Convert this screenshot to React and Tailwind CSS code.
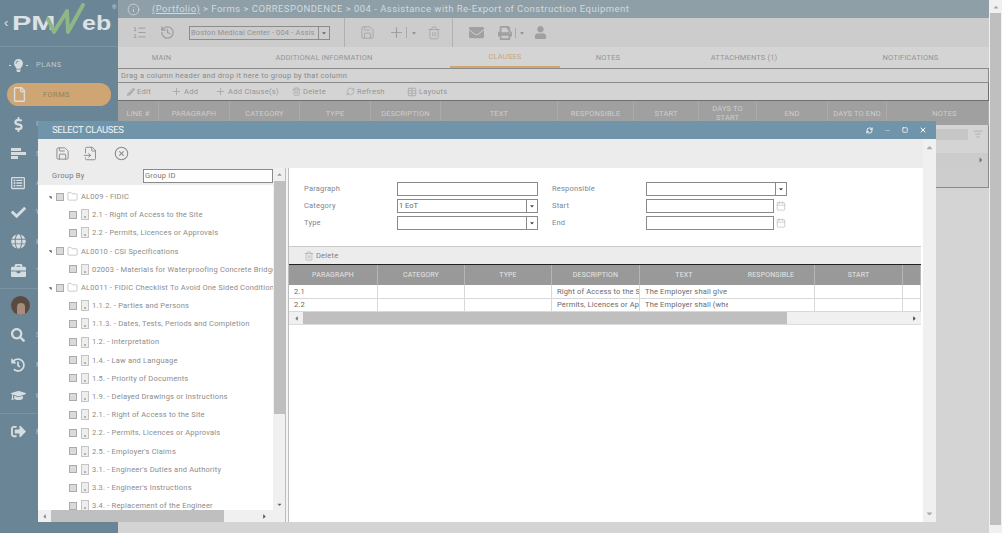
import React from "react";
import { FaDollarSign, FaCheck, FaGlobe, FaBriefcase, FaSearch, FaHistory, FaGraduationCap, FaSignOutAlt, FaRegFile, FaEnvelope, FaPrint, FaUser, FaPencilAlt, FaCaretDown, FaCaretUp, FaCaretLeft, FaCaretRight, FaRegListAlt, FaLightbulb } from "react-icons/fa";
import { ListOrdered, History, Save, Plus, Trash2, RefreshCw, Table, FileInput, CircleX, Folder, Calendar, Info, Minus, Square, X, ListFilter } from "lucide-react";

const nav = [
  { icon: <div className="flex items-center gap-[1px]"><div className="w-[2px] h-[1px] bg-[#d6dde1]" /><FaLightbulb size={13} /><div className="w-[2px] h-[1px] bg-[#d6dde1]" /></div>, label: "PLANS", cls: "h-[36px]" },
  { icon: <FaRegFile size={15} />, label: "FORMS", cls: "h-[23px] mb-[3px] bg-[#cfa673] rounded-full mx-[7px]", active: true },
  { icon: <FaDollarSign size={15} />, label: "COSTS", cls: "h-[30px]" },
  { bars: true, label: "SCHEDULE", cls: "h-[29px]" },
  { icon: <FaRegListAlt size={14} />, label: "ASSETS", cls: "h-[29px]" },
  { icon: <FaCheck size={15} />, label: "WORKFLOW", cls: "h-[30px]" },
  { icon: <FaGlobe size={15} />, label: "HOME", cls: "h-[29px]" },
  { icon: <FaBriefcase size={15} />, label: "TOOLS", cls: "h-[29px]" },
];
const nav2 = [
  { icon: <FaSearch size={14} />, label: "SEARCH", cls: "h-[30px]" },
  { icon: <FaHistory size={14} />, label: "RECENT", cls: "h-[30px]" },
  { icon: <FaGraduationCap size={15} />, label: "UNIVERSITY", cls: "h-[31px]" },
];

function NavItem({ item }) {
  return (
    <div className={`flex items-center shrink-0 ${item.cls}`}>
      <div className={`flex justify-center text-[#d6dde1] ${item.active ? "w-[24px]" : "w-[36px]"}`}>
        {item.bars ? (
          <div className="flex flex-col gap-[1px]">
            <div className="w-[10px] h-[3px] bg-[#d6dde1]" />
            <div className="w-[15px] h-[3px] bg-[#d6dde1]" />
            <div className="w-[7px] h-[3px] bg-[#d6dde1]" />
          </div>
        ) : item.icon}
      </div>
      <span className={`text-[7.5px] tracking-[0.4px] ${item.active ? "ml-[12px] text-[#93805f]" : "text-[#bcc9d0]"}`}>{item.label}</span>
    </div>
  );
}

function Sidebar() {
  return (
    <div className="w-[118px] h-[533px] shrink-0 bg-[#6a8595] flex flex-col">
      <div className="h-[47px] shrink-0 border-b border-[#7b93a2] relative flex items-center pl-[4px] font-['Liberation_Sans',sans-serif] font-bold text-[#dbe1e5]">
        <span className="w-[8px] text-[13px] font-normal">‹</span>
        <span className="w-[70px] text-[20px] inline-block origin-left scale-x-[1.45]">PM</span>
        <span className="w-[30px] text-[20px] inline-block origin-left scale-x-[1.25]">eb</span>
        <span className="text-[6px] font-normal self-start mt-[3px]">®</span>
        <svg viewBox="0 0 44 32" className="absolute left-[44px] top-[3px] w-[44px] h-[32px]">
          <path d="M4 16 L10 29 L23 8 L24 29 L39 2" fill="none" stroke="#8db784" strokeWidth="4" strokeLinejoin="round" strokeLinecap="round" />
        </svg>
      </div>
      <div className="flex flex-col">
        {nav.map((n) => <NavItem key={n.label} item={n} />)}
      </div>
      <div className="border-t border-[#7b93a2] mt-[3px] h-[32px] shrink-0 flex items-center pl-[11px] pt-[2px]">
        <div className="w-[19px] h-[19px] rounded-full bg-[#5a4a40] flex items-end justify-center overflow-hidden">
          <div className="w-[8px] h-[12px] rounded-t-full bg-[#a58c7c]" />
        </div>
      </div>
      {nav2.map((n) => <NavItem key={n.label} item={n} />)}
      <div className="border-t border-[#7b93a2] h-[36px] mt-[2px] shrink-0 flex items-center">
        <div className="w-[36px] flex justify-center text-[#d6dde1]"><FaSignOutAlt size={15} /></div>
        <span className="text-[7.5px] text-[#bcc9d0]">EXIT</span>
      </div>
    </div>
  );
}

const tabs = [
  ["MAIN", "w-[87px]"],
  ["ADDITIONAL INFORMATION", "w-[238px]"],
  ["CLAUSES", "w-[110px] ml-[7px] border-b-2 border-[#cfa673] text-[#c8a678]"],
  ["NOTES", "w-[96px]"],
  ["ATTACHMENTS (1)", "w-[176px]"],
  ["NOTIFICATIONS", "w-[157px]"],
];
const mainCols = [
  ["LINE #", "w-[41px]"], ["PARAGRAPH", "w-[71px]"], ["CATEGORY", "w-[70px]"], ["TYPE", "w-[71px]"], ["DESCRIPTION", "w-[70px]"],
  ["TEXT", "w-[117px]"], ["RESPONSIBLE", "w-[76px]"], ["START", "w-[65px]"], ["DAYS TO START", "w-[58px] px-[12px]"], ["END", "w-[71px]"], ["DAYS TO END", "w-[59px]"], ["NOTES", "w-[102px] pl-[14px]"],
];

function TbBtn({ icon, label, cls }) {
  return (
    <div className={`flex items-center gap-[2px] ${cls}`}>
      <span className="text-[#a8a8a8]">{icon}</span>
      <span>{label}</span>
    </div>
  );
}

function Background() {
  return (
    <div className="w-[871px] h-[533px] shrink-0 bg-[#d4d4d4] flex flex-col text-[7.5px] tracking-[0.15px] text-[#959595]">
      <div className="h-[18px] shrink-0 bg-[#8e9fa8] flex items-center text-[#d3dade] text-[9.5px] tracking-[0.46px]">
        <Info size={13} strokeWidth={1.5} className="ml-[9px] mr-[12px] shrink-0" />
        <span className="whitespace-nowrap"><span className="underline">(Portfolio)</span> &gt; Forms &gt; CORRESPONDENCE &gt; 004 - Assistance with Re-Export of Construction Equipment</span>
      </div>
      <div className="h-[29px] shrink-0 bg-[#cccccc] flex items-center text-[#a0a0a0]">
        <ListOrdered size={15} strokeWidth={1.6} className="ml-[14px]" />
        <History size={15} strokeWidth={2.2} className="ml-[13px]" />
        <div className="ml-[14px] w-[141px] h-[14px] border border-[#8c8c8c] flex items-center text-[7.5px] text-[#929292] whitespace-nowrap overflow-hidden">
          <span className="flex-1 pl-[1px] overflow-hidden">Boston Medical Center - 004 - Assis</span>
          <span className="w-[11px] h-full border-l border-[#8c8c8c] flex items-center justify-center text-[#666] shrink-0"><FaCaretDown size={6} /></span>
        </div>
        <div className="ml-[14px] mr-[15px] w-[1px] h-[29px] bg-[#b0b0b0]" />
        <Save size={15} strokeWidth={1.3} />
        <Plus size={17} strokeWidth={1.6} className="ml-[13px]" />
        <div className="w-[1px] h-[11px] bg-[#aaa] ml-[1px]" />
        <FaCaretDown size={6} className="ml-[4px] text-[#888]" />
        <Trash2 size={14} strokeWidth={1.3} className="ml-[10px]" />
        <div className="ml-[11px] mr-[16px] w-[1px] h-[29px] bg-[#b0b0b0]" />
        <FaEnvelope size={15} />
        <FaPrint size={14} className="ml-[14px]" />
        <div className="w-[1px] h-[10px] bg-[#aaa] ml-[3px]" />
        <FaCaretDown size={6} className="ml-[3px] text-[#888]" />
        <FaUser size={13} className="ml-[9px]" />
      </div>
      <div className="h-[22px] shrink-0 flex border-b border-[#8a8a8a]">
        {tabs.map(([t, c]) => <div key={t} className={`${c} h-full shrink-0 flex items-center justify-center`}>{t}</div>)}
      </div>
      <div className="h-[14px] shrink-0 flex items-center pl-[3px] border-b border-[#8a8a8a] border-r tracking-[0.3px] text-[#8a8a8a] whitespace-nowrap">Drag a column header and drop it here to group by that column</div>
      <div className="h-[18px] shrink-0 flex items-center border-b border-[#6f6f6f] border-r tracking-[0.3px]">
        <TbBtn icon={<FaPencilAlt size={8} />} label="Edit" cls="ml-[9px] w-[44px]" />
        <TbBtn icon={<Plus size={11} />} label="Add" cls="w-[44px]" />
        <TbBtn icon={<Plus size={11} />} label="Add Clause(s)" cls="w-[77px]" />
        <TbBtn icon={<Trash2 size={9} />} label="Delete" cls="w-[54px]" />
        <TbBtn icon={<RefreshCw size={9} />} label="Refresh" cls="w-[61px]" />
        <TbBtn icon={<Table size={10} />} label="Layouts" />
      </div>
      <div className="h-[24px] shrink-0 flex bg-[#a0a0a0] text-[#cdcdcd]">
        {mainCols.map(([t, c]) => (
          <div key={t} className={`${c} shrink-0 flex items-center justify-center text-center leading-[9px] border-r border-[#ababab]`}>{t}</div>
        ))}
      </div>
      <div className="flex justify-end h-[18px] shrink-0 items-center bg-[#d4d4d4] border-r border-[#8a8a8a]">
        <div className="w-[40px] h-[11px] bg-[#c6c6c6]" />
        <div className="w-[20px] flex justify-center text-[#aaa]"><ListFilter size={10} /></div>
      </div>
      <div className="h-[10px] shrink-0 bg-[#d4d4d4] border-r border-[#8a8a8a]" />
      <div className="h-[14px] shrink-0 bg-[#cccccc] flex justify-end items-center pr-[3px] text-[#777] border-r border-[#8a8a8a]"><FaCaretRight size={8} /></div>
      <div className="h-[21px] shrink-0 bg-[#cdcdcd] border-b border-r border-[#8a8a8a]" />
    </div>
  );
}

const folders = [
  { t: "AL009 - FIDIC", folder: true },
  { t: "2.1 - Right of Access to the Site" },
  { t: "2.2 - Permits, Licences or Approvals" },
  { t: "AL0010 - CSI Specifications", folder: true },
  { t: "02003 - Materials for Waterproofing Concrete Bridge Decks" },
  { t: "AL0011 - FIDIC Checklist To Avoid One Sided Conditions", folder: true },
  { t: "1.1.2. - Parties and Persons" },
  { t: "1.1.3.  - Dates, Tests, Periods and Completion" },
  { t: "1.2. - Interpretation" },
  { t: "1.4.  - Law and Language" },
  { t: "1.5. - Priority of Documents" },
  { t: "1.9. - Delayed Drawings or Instructions" },
  { t: "2.1. - Right of Access to the Site" },
  { t: "2.2.  - Permits, Licences or Approvals" },
  { t: "2.5. - Employer's Claims" },
  { t: "3.1. - Engineer's Duties and Authority" },
  { t: "3.3. - Engineer's Instructions" },
  { t: "3.4. - Replacement of the Engineer" },
];

function Check() {
  return <div className="w-[8px] h-[8px] shrink-0 bg-[#dadada] border border-[#ababab]" />;
}

function DocIcon() {
  return (
    <svg viewBox="0 0 8 11" className="w-[8px] h-[11px] ml-[4px] mr-[3px] shrink-0">
      <rect x="0.5" y="0.5" width="7" height="10" fill="#eeeeee" stroke="#c4c4c4" />
      <rect x="3" y="7" width="2" height="2" fill="#b4b4b4" />
    </svg>
  );
}

function TreeRow({ r }) {
  return (
    <div className={`h-[18.2px] shrink-0 flex items-center whitespace-nowrap ${r.folder ? "pl-[8px]" : "pl-[31px]"}`}>
      {r.folder && <FaCaretUp size={6} className="text-[#555] w-[10px] rotate-45 shrink-0" />}
      <Check />
      {r.folder ? (
        <Folder size={11} strokeWidth={1} className="ml-[3px] mr-[3px] text-[#8e8e8e] shrink-0" />
      ) : <DocIcon />}
      <span className="text-[7.5px] tracking-[0.2px] text-[#8c8c8c]">{r.t}</span>
    </div>
  );
}

function Field({ label, select, cal, value, labelCls = "w-[94px]" }) {
  return (
    <div className="flex items-center h-[17px]">
      <span className={`${labelCls} shrink-0 text-[7.5px] tracking-[0.2px] text-[#7d8690]`}>{label}</span>
      <div className={`h-[14px] shrink-0 border border-[#8a8a8a] flex items-center text-[7.5px] text-[#666] ${cal ? "w-[128px]" : "w-[141px]"}`}>
        <span className="flex-1 pl-[1px]">{value}</span>
        {select && <span className="w-[11px] h-full border-l border-[#8a8a8a] flex items-center justify-center shrink-0"><FaCaretDown size={6} className="text-[#444]" /></span>}
      </div>
      {cal && <Calendar size={10} strokeWidth={1.1} className="ml-[2px] text-[#999] shrink-0" />}
    </div>
  );
}

const gridCols = [
  ["PARAGRAPH", "w-[89px]"], ["CATEGORY", "w-[87px]"], ["TYPE", "w-[87px]"], ["DESCRIPTION", "w-[88px]"], ["TEXT", "w-[88px]"], ["RESPONSIBLE", "w-[87px]"], ["START", "w-[88px]"], ["", "w-[18px]"],
];
const gridRows = [
  ["2.1", "", "", "Right of Access to the Site", "The Employer shall give", "", "", ""],
  ["2.2", "", "", "Permits, Licences or Approvals", "The Employer shall (whe", "", "", ""],
];

function Modal() {
  return (
    <div className="absolute left-[38px] top-[121px] w-[898px] h-[401px] flex flex-col bg-white">
      <div className="h-[18px] shrink-0 bg-[#7094aa] flex items-center text-white">
        <span className="ml-[14px] flex-1 text-[9.5px] tracking-[-0.3px] text-[#f0f4f6]">SELECT CLAUSES</span>
        <RefreshCw size={7} strokeWidth={3} className="mr-[11px]" />
        <Minus size={7} strokeWidth={2} className="mr-[11px] text-[#c9d6de]" />
        <Square size={6} strokeWidth={3} className="mr-[11px]" />
        <X size={8} strokeWidth={3} className="mr-[9px]" />
      </div>
      <div className="flex-1 flex min-h-0">
        <div className="w-[885px] shrink-0 flex flex-col">
          <div className="h-[29px] shrink-0 bg-[#ececec] flex items-center text-[#8a8a8a]">
            <Save size={15} strokeWidth={1.5} className="ml-[17px]" />
            <FileInput size={15} strokeWidth={1.5} className="ml-[13px]" />
            <CircleX size={15} strokeWidth={1.7} className="ml-[16px]" />
          </div>
          <div className="flex-1 flex min-h-0">
            <div className="w-[247px] shrink-0 flex flex-col">
              <div className="flex flex-1 min-h-0">
                <div className="w-[235px] shrink-0 flex flex-col overflow-hidden">
                  <div className="h-[17px] shrink-0 bg-[#ececec] flex items-center pb-[1px]">
                    <span className="w-[105px] pl-[14px] text-[7.5px] tracking-[0.3px] text-[#7a7a7a]">Group By</span>
                    <div className="w-[130px] h-[14px] border border-[#8a8a8a] bg-white flex items-center pl-[1px] text-[7.5px] text-[#777] tracking-[0.2px]">Group ID</div>
                  </div>
                  <div className="flex-1 min-h-0 overflow-hidden flex flex-col pt-[2.5px]">
                    {folders.map((r, i) => <TreeRow key={i} r={r} />)}
                  </div>
                </div>
                <div className="w-[12px] shrink-0 bg-[#f0f0f0] flex flex-col items-center text-[#777]">
                  <div className="h-[13px] shrink-0 flex items-center"><FaCaretUp size={7} className="text-[#999]" /></div>
                  <div className="w-[11px] h-[233px] bg-[#bfbfbf]" />
                  <div className="flex-1" />
                  <div className="h-[12px] shrink-0 flex items-center"><FaCaretDown size={7} className="text-[#666]" /></div>
                </div>
              </div>
              <div className="h-[12px] shrink-0 bg-[#f0f0f0] flex items-center text-[#888]">
                <div className="w-[13px] flex justify-center"><FaCaretLeft size={7} /></div>
                <div className="w-[173px] h-full bg-[#bfbfbf]" />
                <div className="flex-1 flex justify-end pr-[5px] text-[#555] mr-[12px]"><FaCaretRight size={7} /></div>
              </div>
            </div>
            <div className="w-[4px] shrink-0 border-x border-[#bdbdbd] bg-[#f4f4f4]" />
            <div className="flex-1 min-w-0 flex flex-col">
              <div className="flex pt-[12px] pl-[15px] h-[78px] shrink-0">
                <div className="w-[248px] shrink-0 flex flex-col">
                  <Field label="Paragraph" labelCls="w-[93px]" />
                  <Field label="Category" labelCls="w-[93px]" select value="1 EoT" />
                  <Field label="Type" labelCls="w-[93px]" select />
                </div>
                <div className="flex flex-col">
                  <Field label="Responsible" select />
                  <Field label="Start" cal />
                  <Field label="End" cal />
                </div>
              </div>
              <div className="h-[19px] shrink-0 w-[632px] bg-[#ececec] border-t border-[#c9c9c9] border-b border-b-[#222] flex items-center text-[7.5px] tracking-[0.2px] text-[#808080] pl-[15px] gap-[2px]">
                <Trash2 size={10} strokeWidth={1.2} className="text-[#999]" />Delete
              </div>
              <div className="w-[632px] flex flex-col shrink-0 border-b border-[#dcdcdc]">
                <div className="h-[20px] flex bg-[#999999] text-[#e6e6e6] text-[7px] tracking-[0.15px]">
                  {gridCols.map(([t, c], i) => (
                    <div key={i} className={`${c} shrink-0 flex items-center justify-center ${t === "TEXT" ? "" : "border-r border-[#b5b5b5]"}`}>{t}</div>
                  ))}
                </div>
                {gridRows.map((row, i) => (
                  <div key={i} className="h-[13.5px] flex border-b border-[#d8d8d8] text-[7.5px] tracking-[0.15px] text-[#6a6a6a]">
                    {row.map((v, j) => (
                      <div key={j} className={`${gridCols[j][1]} shrink-0 whitespace-nowrap overflow-hidden flex items-center px-[5px] ${j === 4 ? "" : "border-r border-[#d8d8d8]"}`}>{v}</div>
                    ))}
                  </div>
                ))}
                <div className="h-[12px] flex items-center bg-[#f0f0f0] text-[#777]">
                  <div className="w-[14px] flex justify-center"><FaCaretLeft size={7} /></div>
                  <div className="w-[484px] h-full bg-[#bfbfbf]" />
                  <div className="flex-1 flex justify-end pr-[3px] text-[#444]"><FaCaretRight size={7} /></div>
                </div>
              </div>
            </div>
          </div>
        </div>
        <div className="w-[13px] shrink-0 bg-[#f0f0f0] flex flex-col items-center justify-between py-[4px] text-[#aaa]">
          <FaCaretUp size={9} />
          <FaCaretDown size={9} />
        </div>
      </div>
    </div>
  );
}

export default function App() {
  return (
    <div className="relative w-[1004px] h-[535px] overflow-hidden bg-white flex font-['Roboto',sans-serif]">
      <Sidebar />
      <Background />
      <div className="w-[13px] h-[533px] shrink-0 bg-[#f0f0f0] flex flex-col items-center">
        <div className="h-[13px] shrink-0 flex items-center text-[#aaa]"><FaCaretUp size={8} /></div>
        <div className="w-[11px] h-[512px] bg-[#bfbfbf]" />
      </div>
      <Modal />
    </div>
  );
}
